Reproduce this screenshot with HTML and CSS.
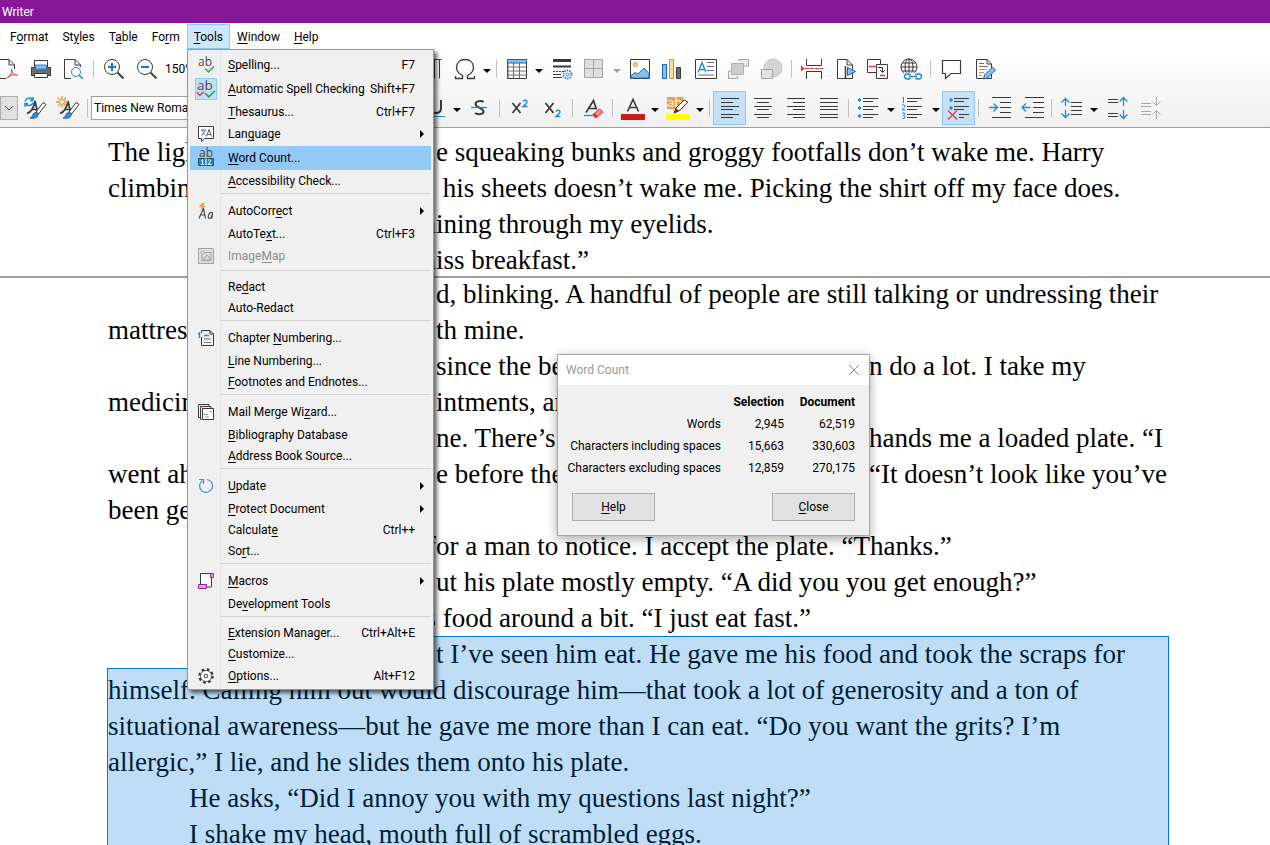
FILE: index.html
```html
<!DOCTYPE html>
<html lang="en">
<head>
<meta charset="utf-8">
<title>Writer</title>
<link rel="stylesheet" href="styles.css">
</head>
<body>
<header class="titlebar">Writer</header>

<nav class="menubar">
  <button>F<u>o</u>rmat</button>
  <button>St<u>y</u>les</button>
  <button>T<u>a</u>ble</button>
  <button>Fo<u>r</u>m</button>
  <button class="open"><u>T</u>ools</button>
  <button><u>W</u>indow</button>
  <button><u>H</u>elp</button>
</nav>

<section class="toolbars">
  <div class="toolbar">
    <div class="left standard">
      <button class="tool cut" aria-label="Export as PDF"><svg viewBox="0 0 24 24"><path class="k" d="M2 2.500H14L19.500 8V12M14 2.500V8H19.500M2 21.500H11"/><path class="r" d="M12 21c4-2 5-6 4.500-9 1 5 3 6 6 6-3-1-7 0-10.500 3"/></svg></button>
      <button class="tool" aria-label="Print"><svg viewBox="0 0 24 24"><path d="M2 10h20v9H2z" fill="#6d6d6d"/><path class="k" d="M2.500 10.500h19v8h-19z"/><path d="M5.500 3.500h13v7h-13z" fill="#fff" stroke="#3a3a38"/><path d="M6.500 8h11v4h-11z" fill="#83beec" stroke="#1e8bcd"/><path d="M5.500 16.500h13v4h-13z" fill="#fff" stroke="#3a3a38"/></svg></button>
      <button class="tool" aria-label="Print Preview"><svg viewBox="0 0 24 24"><path class="k" d="M9 21.500H2.500V2.500H13L18.500 8V10M13 2.500V8H18.500"/><circle cx="14" cy="15" r="4.500" fill="#fff" stroke="#1e8bcd"/><path d="M17 18l4 4" stroke="#1e8bcd" stroke-width="1.500"/></svg></button>
      <span class="sep"></span>
      <button class="tool" aria-label="Zoom In"><svg viewBox="0 0 24 24"><circle cx="10" cy="10" r="7.500" fill="#fff" stroke="#3a3a38"/><path d="M15.500 15.500l6 6" stroke="#3a3a38" stroke-width="1.800"/><path d="M6 10h8M10 6v8" stroke="#0f79c4" stroke-width="2"/></svg></button>
      <button class="tool" aria-label="Zoom Out"><svg viewBox="0 0 24 24"><circle cx="10" cy="10" r="7.500" fill="#fff" stroke="#3a3a38"/><path d="M15.500 15.500l6 6" stroke="#3a3a38" stroke-width="1.800"/><path d="M6 10h8" stroke="#0f79c4" stroke-width="2"/></svg></button>
      <span class="zoom">150%</span>
    </div>
    <button class="tool" aria-label="Formatting Marks"><svg viewBox="0 0 24 24"><path class="k" d="M21.500 2.500H11a4.500 4.500 0 0 0 0 9h3M14.500 2.500v19M19.500 2.500v19"/></svg></button>
    <button class="tool" aria-label="Special Character"><svg viewBox="0 0 24 24"><path d="M2.500 19v2.500h7v-3C5.500 16.500 3.500 14 3.500 10.500 3.500 5.500 7 2.500 12 2.500s8.500 3 8.500 8c0 3.500-2 6-6 8v3h7V19" fill="none" stroke="#3a3a38" stroke-width="1.300"/></svg></button>
    <span class="caret"></span>
    <span class="sep"></span>
    <button class="tool" aria-label="Insert Table"><svg viewBox="0 0 24 24"><path d="M2.500 2.500h19v19h-19z" fill="#fff" stroke="#3a3a38"/><path d="M3 6.500V21.500M8.500 6v15M14.500 6v15M3 10h18M3 14h18M3 18h18" stroke="#6d6d6d"/><path d="M2.500 2.500h19v3.500h-19z" fill="#83beec" stroke="#1565b4"/></svg></button>
    <span class="caret"></span>
    <button class="tool" aria-label="Line Style"><svg viewBox="0 0 24 24"><path d="M3 3.500h18" stroke="#3a3a38" stroke-width="3"/><path d="M3 9.500h18" stroke="#3a3a38" stroke-width="2"/><path d="M3 14.500h11" stroke="#3a3a38" stroke-dasharray="2 1"/><path d="M3 20.500h9M3 17.500h8" stroke="#3a3a38"/><circle cx="17.500" cy="17.500" r="4" fill="#fff" stroke="#1e8bcd" stroke-width="2" stroke-dasharray="1.500 1"/><circle cx="17.500" cy="17.500" r="1.500" fill="none" stroke="#1e8bcd"/></svg></button>
    <button class="tool" aria-label="Borders"><svg viewBox="0 0 24 24"><path d="M1.500 2.500h18v18h-18zM10.500 2.500v18M1.500 11.500h18" fill="#dedede" stroke="#a3a3a3"/></svg></button>
    <span class="caret dim"></span>
    <button class="tool" aria-label="Insert Image"><svg viewBox="0 0 24 24"><path d="M2.500 2.500h19v19h-19z" fill="#fff" stroke="#3a3a38"/><circle cx="7.500" cy="7.500" r="2" fill="#fbd6a1" stroke="#ed8733"/><path d="M3 18.500l4-3 3 1.500 6-6 5 5.500v4.500H3z" fill="#83beec" stroke="#1e6fc0"/></svg></button>
    <button class="tool" aria-label="Insert Chart"><svg viewBox="0 0 24 24"><path d="M1.500 7.500h4v14h-4z" fill="#83beec" stroke="#1565b4"/><path d="M8.500 2.500h4v19h-4z" fill="#fbdc9c" stroke="#e8872f"/><path d="M15.500 10.500h4v11h-4z" fill="#6d6d6d" stroke="#3a3a38"/></svg></button>
    <button class="tool" aria-label="Text Box"><svg viewBox="0 0 24 24"><path d="M1.500 2.500h21v19h-21z" fill="#fff" stroke="#3a3a38"/><path d="M4 15.500L8 5.500l4 10M5.500 12.500h5" fill="none" stroke="#1e8bcd" stroke-width="1.300"/><path d="M13 5.500h7M13 9.500h7M13 13.500h7M4 18h16" stroke="#6d6d6d"/></svg></button>
    <button class="tool" aria-label="Bring to Front"><svg viewBox="0 0 24 24"><path d="M12 4.500V2.500h9.500V9H17M4.500 14H1.500v7.500h9V19" fill="#eee" stroke="#a3a3a3"/><path d="M4.500 6.500h12v11h-12z" fill="#cdcdcd" stroke="#b0b0b0"/></svg></button>
    <button class="tool" aria-label="Insert Shape"><svg viewBox="0 0 24 24"><circle cx="13" cy="11" r="9" fill="#d4d4d4" stroke="#c4c4c4"/><path d="M1.500 12.500h11v9h-11z" fill="#e2e2e2" stroke="#a3a3a3"/></svg></button>
    <span class="sep"></span>
    <button class="tool" aria-label="Page Break"><svg viewBox="0 0 24 24"><path class="k" d="M6.500 2v6.500h15V2M6.500 22v-7.500h15V22"/><path d="M1 8.500l4 3-4 3z" fill="#e03e3e"/><path d="M5 11.500h18" stroke="#e03e3e" stroke-dasharray="4 1"/></svg></button>
    <button class="tool" aria-label="Insert Field"><svg viewBox="0 0 24 24"><path d="M4.500 21.500V2.500H14L19.500 8v13.500z" fill="#fff" stroke="#3a3a38"/><path d="M14 2.500V8h5.500" fill="none" stroke="#3a3a38"/><path d="M12.500 9v13" stroke="#3a3a38" stroke-width="1.500"/><path d="M14.500 10.500l8 4-8 4z" fill="#83beec" stroke="#1565b4"/></svg></button>
    <button class="tool" aria-label="Insert Cross-reference"><svg viewBox="0 0 24 24"><path class="k" d="M14.500 7V2.500h-13v13H10M15.500 7.500h6v14h-11v-14z"/><path d="M3 9.500h8M14 18.500h5" stroke="#e03e3e" stroke-width="1.500"/><path d="M12 10.500h4.500V15M14 13l2.500 2.500L19 13" fill="none" stroke="#3a3a38"/></svg></button>
    <button class="tool" aria-label="Insert Hyperlink"><svg viewBox="0 0 24 24"><circle cx="10" cy="10" r="8" fill="#fff" stroke="#3a3a38"/><ellipse cx="10" cy="10" rx="4" ry="8" fill="none" stroke="#3a3a38"/><path d="M10 2v14M2 10h16M3.500 6h13M3.500 14h13" stroke="#3a3a38"/><path d="M5 16h18v7H5z" fill="#f9f9f9"/><path d="M11.500 21c-1 1.500-6 1.500-6-1.500s5-3 6-1.500M16.500 18c1-1.500 6-1.500 6 1.500s-5 3-6 1.500M10 19.500h8" fill="none" stroke="#1e8bcd" stroke-width="1.400"/></svg></button>
    <span class="sep"></span>
    <button class="tool" aria-label="Insert Comment"><svg viewBox="0 0 24 24"><path d="M3.500 3.500h18v13H12l-5.500 5v-5h-3z" fill="#fff" stroke="#3a3a38" stroke-width="1.200"/></svg></button>
    <button class="tool" aria-label="Track Changes"><svg viewBox="0 0 24 24"><path d="M4.500 21.500V2.500H15L19.500 7v14.500z" fill="#fff" stroke="#3a3a38"/><path d="M15 2.500V7h4.500" fill="none" stroke="#3a3a38"/><path d="M7 6.500h5M7 9.500h9" stroke="#6d6d6d"/><path d="M7 12.500h8M7 15.500h5M7 18.500h3" stroke="#ed8733"/><path d="M11.500 22l1-4 8-8 3 3-8 8z" fill="#83beec" stroke="#1565b4"/></svg></button>
  </div>

  <div class="toolbar second">
    <div class="left formatting">
      <button class="style-drop" aria-label="Paragraph Style"><svg viewBox="0 0 10 10"><path d="M1 3l4 4 4-4" fill="none" stroke="#444"/></svg></button>
      <button class="tool" aria-label="Update Style"><svg viewBox="0 0 24 24"><path d="M4 17.500C8 16 11 11 12 5l3 13M8 13.500h6" fill="none" stroke="#3a3a38" stroke-width="1.700"/><path d="M2 5.500C3 1.500 8 1 10 4M10 1v3.500H7M10 6.500c-1 3.500-6 4-8 1M2 11V7.500h3" fill="none" stroke="#1e8bcd" stroke-width="1.400"/><path d="M13 16L20 6.500l3 2L15.500 18z" fill="#fff" stroke="#3a3a38"/><path d="M7 22c3 0 2-5 5.500-5.500 3 0 3.500 2.500 1.500 4.500-2 1.500-5 1.500-7 1z" fill="#3b87d3" stroke="#1565b4"/></svg></button>
      <button class="tool" aria-label="New Style"><svg viewBox="0 0 24 24"><path d="M4 17.500C8 16 11 11 12 5l3 13M8 13.500h6" fill="none" stroke="#3a3a38" stroke-width="1.700"/><path d="M6 0v12M0 6h12M2 2l8 8M10 2l-8 8" stroke="#f39a2e" stroke-width="1.300"/><circle cx="6" cy="6" r="2.300" fill="#fff" stroke="#f39a2e"/><path d="M13 16L20 6.500l3 2L15.500 18z" fill="#fff" stroke="#3a3a38"/><path d="M7 22c3 0 2-5 5.500-5.500 3 0 3.500 2.500 1.500 4.500-2 1.500-5 1.500-7 1z" fill="#3b87d3" stroke="#1565b4"/></svg></button>
      <span class="sep"></span>
      <input class="font-name" aria-label="Font Name" value="Times New Roman">
    </div>
    <button class="tool" aria-label="Underline"><svg viewBox="0 0 24 24"><path d="M8 4v8c0 3 2 5 5 5s5-2 5-5V4" fill="none" stroke="#3a3a38" stroke-width="2"/><path d="M4 20.500h18" stroke="#1e8bcd"/></svg></button>
    <span class="caret"></span>
    <button class="tool" aria-label="Strikethrough"><svg viewBox="0 0 24 24"><path d="M15.500 6C14 4.500 7.500 4.500 7.500 8c0 4 8 3.500 8 7.500 0 3.500-6.500 3-8.500 1.500" fill="none" stroke="#3a3a38" stroke-width="2"/><path d="M3 11.500h16" stroke="#1e8bcd" stroke-width="1.300"/></svg></button>
    <span class="sep"></span>
    <button class="tool" aria-label="Superscript"><svg viewBox="0 0 24 24"><path d="M4.500 7l8 10M12.500 7l-8 10" stroke="#3a3a38" stroke-width="1.800"/><path d="M15 5.500c1-2 4-1.500 4 .5 0 1.500-2 2.500-4 4.500h4.500" fill="none" stroke="#1e8bcd" stroke-width="1.400"/></svg></button>
    <button class="tool" aria-label="Subscript"><svg viewBox="0 0 24 24"><path d="M4.500 7l8 10M12.500 7l-8 10" stroke="#3a3a38" stroke-width="1.800"/><path d="M15 15.500c1-2 4-1.500 4 .5 0 1.500-2 2.500-4 4.500h4.500" fill="none" stroke="#1e8bcd" stroke-width="1.400"/></svg></button>
    <span class="sep"></span>
    <button class="tool" aria-label="Clear Formatting"><svg viewBox="0 0 24 24"><path d="M5 16.500L12.500 4.500l3 9M8 12.500h7" fill="none" stroke="#3a3a38" stroke-width="1.700"/><path d="M3 19.500h8" stroke="#1e8bcd" stroke-width="1.300"/><path d="M11.500 19l7-6 3.500 3-7 6z" fill="#f58a90" stroke="#d8303a"/><path d="M11.500 19l2-2 3.500 3.500-2 1.500z" fill="#d8303a"/></svg></button>
    <span class="sep"></span>
    <button class="tool" aria-label="Font Color"><svg viewBox="0 0 24 24"><path d="M6.500 15.500L12 3.500l5.500 12M8.500 11.500h7" fill="none" stroke="#3a3a38" stroke-width="1.600"/><path d="M0 18h24v6H0z" fill="#cb1c1c"/></svg></button>
    <span class="caret"></span>
    <button class="tool" aria-label="Highlighting Color"><svg viewBox="0 0 24 24"><path d="M1 1h16v12H1z" fill="#f89b3c"/><text x="1" y="11" class="glyph" fill="#fff">ab</text><path d="M8 17l2-5 8-8 4 2-9 9z" fill="#fff" stroke="#3a3a38"/><path d="M8 17l2-5 3 3z" fill="#3a3a38"/><path d="M0 18h24v6H0z" fill="#ff0"/></svg></button>
    <span class="caret"></span>
    <span class="sep"></span>
    <button class="tool on" aria-label="Align Left"><svg viewBox="0 0 24 24"><path class="k" d="M3 2.500h18M3 6.500h12M3 10.500h18M3 13.500h12M3 18.500h18M3 21.500h12"/></svg></button>
    <button class="tool" aria-label="Center"><svg viewBox="0 0 24 24"><path class="k" d="M3 2.500h18M6 6.500h12M3 10.500h18M6 13.500h12M3 18.500h18M6 21.500h12"/></svg></button>
    <button class="tool" aria-label="Align Right"><svg viewBox="0 0 24 24"><path class="k" d="M3 2.500h18M9 6.500h12M3 10.500h18M9 13.500h12M3 18.500h18M9 21.500h12"/></svg></button>
    <button class="tool" aria-label="Justified"><svg viewBox="0 0 24 24"><path class="k" d="M3 2.500h18M3 6.500h18M3 10.500h18M3 13.500h18M3 18.500h18M3 21.500h18"/></svg></button>
    <span class="sep"></span>
    <button class="tool" aria-label="Bullets"><svg viewBox="0 0 24 24"><path class="k" d="M6 2.500h15M6 5.500h10M6 10.500h15M6 13.500h10M6 18.500h15M6 21.500h10"/><g fill="#1e8bcd"><circle cx="2.500" cy="4" r="1.700"/><circle cx="2.500" cy="12" r="1.700"/><circle cx="2.500" cy="20" r="1.700"/></g></svg></button>
    <span class="caret"></span>
    <button class="tool" aria-label="Numbering"><svg viewBox="0 0 24 24"><path class="k" d="M5 2.500h15M5 5.500h10M5 10.500h15M5 13.500h10M5 18.500h15M5 21.500h10"/><path d="M0 2.500L1.500 1v6M0 9.500c1-1.500 3-1 3 .5 0 1-2 2.500-3 4h3.500M0 17.500c1-1 3-1 3 .5s-2 1.500-2 1.500 2 0 2 1.500-2 2-3 1" fill="none" stroke="#1e8bcd"/></svg></button>
    <span class="caret"></span>
    <button class="tool on" aria-label="No List"><svg viewBox="0 0 24 24"><path class="k" d="M7 2.500h15M7 5.500h10M7 10.500h15M7 13.500h10M12 18.500h10M12 21.500h5"/><g fill="#1e8bcd"><circle cx="4" cy="4" r="1.700"/><circle cx="4" cy="12" r="1.700"/></g><path d="M1 14.500l9 9M10 14.500l-9 9" stroke="#e03e3e" stroke-width="1.300"/></svg></button>
    <span class="sep"></span>
    <button class="tool" aria-label="Increase Indent"><svg viewBox="0 0 24 24"><path class="k" d="M5 1.500h19M13 6.500h11M13 11.500h11M13 16.500h11M5 21.500h19"/><path class="b" d="M2 11.500h8.500M6.500 7.500l4 4-4 4"/></svg></button>
    <button class="tool" aria-label="Decrease Indent"><svg viewBox="0 0 24 24"><path class="k" d="M5 1.500h19M13 6.500h11M13 11.500h11M13 16.500h11M5 21.500h19"/><path class="b" d="M10.500 11.500H2M6 7.500l-4 4 4 4"/></svg></button>
    <span class="sep"></span>
    <button class="tool" aria-label="Line Spacing"><svg viewBox="0 0 24 24"><path class="k" d="M11 6.500h11M11 10.500h11M11 14.500h11M11 18.500h11"/><path class="b" d="M5.500 10V2.500M1.500 6.500l4-4 4 4M5.500 14v7.500M1.500 17.500l4 4 4-4"/></svg></button>
    <span class="caret"></span>
    <button class="tool" aria-label="Increase Paragraph Spacing"><svg viewBox="0 0 24 24"><path class="k" d="M3 3.500h10M3 6.500h10M3 17.500h10M3 20.500h10"/><path class="b" d="M18.500 10V1.500M14.500 5.500l4-4 4 4M18.500 14v8.500M14.500 18.500l4 4 4-4"/></svg></button>
    <button class="tool" aria-label="Decrease Paragraph Spacing"><svg viewBox="0 0 24 24"><path d="M3 7.500h10M3 10.500h10M3 15.500h10M3 18.500h10M18.500 1v8.500M14.500 5.500l4 4 4-4M18.500 23v-8.500M14.500 18.500l4-4 4 4" fill="none" stroke="#a9a9a9"/></svg></button>
  </div>
</section>

<main class="workspace">
  <article class="page first">
    <p class="line"><span class="start">The ligh</span><span>e squeaking bunks and groggy footfalls don’t wake me. Harry</span></p>
    <p class="line"><span class="start">climbing</span><span> his sheets doesn’t wake me. Picking the shirt off my face does.</span></p>
    <p class="line"><span class="end">h</span><span>ining through my eyelids.</span></p>
    <p class="line"><span class="end">m</span><span>iss breakfast.”</span></p>
  </article>
  <article class="page">
    <p class="line"><span></span><span>d, blinking. A handful of people are still talking or undressing their</span></p>
    <p class="line"><span class="start">mattress</span><span>th mine.</span></p>
    <p class="line split"><span></span><span>since the best</span><span>n do a lot. I take my</span></p>
    <p class="line split"><span class="start">medicine</span><span>intments, and</span></p>
    <p class="line split"><span></span><span>ne. There’s</span><span>hands me a loaded plate. “I</span></p>
    <p class="line split"><span class="start">went ahead</span><span>e before the</span><span>“It doesn’t look like you’ve</span></p>
    <p class="line"><span class="start">been getting</span></p>
    <p class="line"><span class="end">f</span><span>or a man to notice. I accept the plate. “Thanks.”</span></p>
    <p class="line"><span></span><span>ut his plate mostly empty. “A did you you get enough?”</span></p>
    <p class="line"><span class="end">s</span><span> food around a bit. “I just eat fast.”</span></p>
    <div class="selected">
      <p class="line"><span></span><span>t I’ve seen him eat. He gave me his food and took the scraps for</span></p>
      <p>himself. Calling him out would discourage him—that took a lot of generosity and a ton of</p>
      <p>situational awareness—but he gave me more than I can eat. “Do you want the grits? I’m</p>
      <p>allergic,” I lie, and he slides them onto his plate.</p>
      <p class="indent">He asks, “Did I annoy you with my questions last night?”</p>
      <p class="indent">I shake my head, mouth full of scrambled eggs.</p>
    </div>
  </article>
</main>

<div class="menu" role="menu">
  <button class="icon-row"><svg viewBox="0 0 16 16"><text x="0" y="9" class="glyph small">ab</text><path d="M7 11.500l3.500 3.500L16 9.500" fill="none" stroke="#18ab50" stroke-width="1.300"/></svg><span><u>S</u>pelling...</span><kbd>F7</kbd></button>
  <button class="icon-row checked"><svg viewBox="0 0 16 16"><text x="0" y="9" class="glyph small">ab</text><path d="M0 11l2.500 2.500L6 10.500" fill="none" stroke="#e03e3e" stroke-width="1.300"/><path d="M7 11.500l3.500 3.500L16 9.500" fill="none" stroke="#18ab50" stroke-width="1.300"/></svg><span><u>A</u>utomatic Spell Checking</span><kbd>Shift+F7</kbd></button>
  <button><i></i><span><u>T</u>hesaurus...</span><kbd>Ctrl+F7</kbd></button>
  <button class="icon-row"><svg viewBox="0 0 16 16"><path d="M.5.500h15v12h-9l-3 3v-3h-3z" fill="#fff" stroke="#3a3a38"/><path d="M3 4h5M5.500 3v1M3.500 10l4-6M7.500 9.500l-4-5.500" fill="none" stroke="#3b87d3"/><path d="M8.500 10.500l2.500-7 2.500 7M9.500 8.500h3" fill="none" stroke="#555"/></svg><span>Lan<u>g</u>uage</span><kbd></kbd><b></b></button>
  <button class="icon-row current"><svg viewBox="0 0 16 16"><text x="1" y="7" class="glyph small">ab</text><path d="M.5 8.500h15v7H.5z" fill="#1e8bcd" stroke="#2f4a60"/><path d="M3.500 10.500l1-1v5M3 14.500h3M10 10.500c1-1.500 3-.5 2.500 1l-2.500 3h3.500M8 8.500v7" fill="none" stroke="#fff"/></svg><span><u>W</u>ord Count...</span></button>
  <button><i></i><span><u>A</u>ccessibility Check...</span></button>
  <hr>
  <button class="icon-row"><svg viewBox="0 0 16 16"><path d="M1 15.500L5.500 5.500l2 10M3 12h4.500M14.500 9.500c-4-1-5.500 6-3 6 2 0 3-4 3-6l-.5 6" fill="none" stroke="#4a4a4a" stroke-width="1.200"/><path d="M4 0L1 4h3L2 7.500 8 3H5l2-3z" fill="#f39a2e"/></svg><span>AutoCorr<u>e</u>ct</span><kbd></kbd><b></b></button>
  <button><i></i><span>AutoTe<u>x</u>t...</span><kbd>Ctrl+F3</kbd></button>
  <button class="icon-row disabled" disabled><svg viewBox="0 0 16 16"><path d="M.5.500h15v15H.5z" fill="#dcdcdc" stroke="#a3a3a3"/><circle cx="4.500" cy="4.500" r="1.500" fill="#eee" stroke="#a3a3a3"/><path d="M6 4.500h7v8H4V6M5 12l4-5 4 5z" fill="none" stroke="#a3a3a3"/></svg><span>Image<u>M</u>ap</span></button>
  <hr>
  <button><i></i><span>Re<u>d</u>act</span></button>
  <button><i></i><span>Auto-Redact</span></button>
  <hr>
  <button class="icon-row"><svg viewBox="0 0 16 16"><path d="M3.500 7V15.500h12V4L12 .5H3.500V3M12 .5V4h3.500" fill="none" stroke="#3a3a38"/><path d="M0 4l1.500-1v5M6 5.500h5" fill="none" stroke="#1e8bcd" stroke-width="1.400"/><path d="M6 9h7M6 12.500h7" stroke="#777"/></svg><span>Chapter <u>N</u>umbering...</span></button>
  <button><i></i><span><u>L</u>ine Numbering...</span></button>
  <button><i></i><span><u>F</u>ootnotes and Endnotes...</span></button>
  <hr>
  <button class="icon-row"><svg viewBox="0 0 16 16"><path d="M2 13.500H.5V.5H11V2M3.500 15.500h-1v-13H13V4" fill="none" stroke="#3a3a38"/><path d="M4.500 4.500h11v11h-11z" fill="#fff" stroke="#3a3a38"/><path d="M6 10.500h4M7 13h4M12 7.500h2" stroke="#4b9fe0"/></svg><span>Mail Merge Wi<u>z</u>ard...</span></button>
  <button><i></i><span><u>B</u>ibliography Database</span></button>
  <button><i></i><span><u>A</u>ddress Book Source...</span></button>
  <hr>
  <button class="icon-row"><svg viewBox="0 0 16 16"><path d="M9 1.500A6.500 6.500 0 1 1 4.500 2.500M1 1.500h4.500V6" fill="none" stroke="#3c96d8" stroke-width="1.200"/></svg><span><u>U</u>pdate</span><kbd></kbd><b></b></button>
  <button><i></i><span><u>P</u>rotect Document</span><kbd></kbd><b></b></button>
  <button><i></i><span>Calculat<u>e</u></span><kbd>Ctrl++</kbd></button>
  <button><i></i><span>So<u>r</u>t...</span></button>
  <hr>
  <button class="icon-row"><svg viewBox="0 0 16 16"><path d="M2.500 12V.5h11v13.500h-5" fill="#fff" stroke="#3a3a38"/><path d="M.5 11.500h8v4h-8zM12.500.500h3v4h-3z" fill="#d9a3dd" stroke="#92278f"/></svg><span><u>M</u>acros</span><kbd></kbd><b></b></button>
  <button><i></i><span>De<u>v</u>elopment Tools</span></button>
  <hr>
  <button><i></i><span><u>E</u>xtension Manager...</span><kbd>Ctrl+Alt+E</kbd></button>
  <button><i></i><span><u>C</u>ustomize...</span></button>
  <button class="icon-row"><svg viewBox="0 0 16 16"><circle cx="8" cy="8" r="6.500" fill="none" stroke="#3a3a38" stroke-width="2.500" stroke-dasharray="2.600 2.500"/><circle cx="8" cy="8" r="5.500" fill="#fff" stroke="#3a3a38" stroke-width=".8"/><circle cx="8" cy="8" r="1.800" fill="none" stroke="#3a3a38"/></svg><span><u>O</u>ptions...</span><kbd>Alt+F12</kbd></button>
</div>

<section class="dialog" role="dialog" aria-labelledby="wc-title">
  <header><h2 id="wc-title">Word Count</h2><button class="close" aria-label="Close window"><svg viewBox="0 0 12 12"><path d="M1 1l10 10M11 1L1 11" stroke="#8a8a8a"/></svg></button></header>
  <table>
    <thead><tr><td></td><th scope="col">Selection</th><th scope="col">Document</th></tr></thead>
    <tbody>
      <tr><th scope="row">Words</th><td>2,945</td><td>62,519</td></tr>
      <tr><th scope="row">Characters including spaces</th><td>15,663</td><td>330,603</td></tr>
      <tr><th scope="row">Characters excluding spaces</th><td>12,859</td><td>270,175</td></tr>
    </tbody>
  </table>
  <footer><button><u>H</u>elp</button><button><u>C</u>lose</button></footer>
</section>
</body>
</html>
```
FILE: styles.css
```css
*,
*::before,
*::after {
  box-sizing: border-box;
}

body {
  margin: 0;
  height: 100vh;
  overflow: hidden;
  display: flex;
  flex-direction: column;
  background: #fff;
  color: #000;
  font: 12px/16px Roboto, "Open Sans", sans-serif;
}

button {
  margin: 0;
  padding: 0;
  border: 0;
  background: none;
  color: inherit;
  font: inherit;
}

u {
  text-underline-offset: 2px;
}

svg {
  display: block;
}

.titlebar {
  flex: none;
  height: 23px;
  padding: 4px 2px;
  background: #881798;
  color: #fff;
}

.menubar {
  flex: none;
  display: flex;
  height: 27px;
  padding: 1px 3px;
}

.menubar button {
  padding: 0 7px;
  border: 1px solid transparent;
  border-width: 1px 0;
}

.menubar .open {
  padding: 0 6px;
  border: 1px solid #90c8f6;
  background: #cce8ff;
}

/* Toolbars */

.toolbars {
  flex: none;
  background: linear-gradient(#fff, #f0f0f0);
  border-bottom: 1px solid #a0a0a0;
}

.toolbar {
  display: flex;
  align-items: center;
  height: 38px;
}

.toolbar.second {
  height: 39px;
}

.toolbar .left {
  flex: none;
  display: flex;
  align-items: center;
  overflow: hidden;
}

.standard {
  width: 415px;
}

.formatting {
  width: 418px;
}

.tool {
  flex: none;
  display: flex;
  align-items: center;
  justify-content: center;
  width: 33px;
  height: 34px;
}

.tool svg {
  flex: none;
  width: 24px;
  height: 24px;
}

.tool.cut {
  width: 24px;
  justify-content: flex-end;
  padding-right: 5px;
}

.tool.on {
  background: #c3e0f7;
  border: 1px solid #90c8f6;
}

.k {
  fill: none;
  stroke: #3a3a38;
}

.b {
  fill: none;
  stroke: #1e8bcd;
  stroke-width: 1.3;
}

.r {
  fill: none;
  stroke: #e03e3e;
}

.glyph {
  font: 13px "Open Sans", sans-serif;
}

.glyph.small {
  font-size: 12px;
  fill: #4a4a4a;
}

.sep {
  flex: none;
  width: 7px;
  height: 18px;
  background: linear-gradient(#c0c0c0, #c0c0c0) center / 1px 100% no-repeat;
}

.caret {
  flex: none;
  width: 12px;
  display: flex;
  justify-content: center;
}

.caret::before {
  content: "";
  margin-top: 4px;
  border: 4px solid transparent;
  border-top-color: #000;
  border-bottom: 0;
}

.caret.dim::before {
  border-top-color: #a0a0a0;
}

.zoom {
  padding-left: 2px;
}

.style-drop {
  flex: none;
  display: flex;
  align-items: center;
  justify-content: center;
  width: 18px;
  height: 24px;
  border: 1px solid #adadad;
  background: #e1e1e1;
}

.style-drop svg {
  width: 10px;
  height: 10px;
}

.font-name {
  width: 200px;
  height: 24px;
  padding: 0 2px;
  border: 1px solid #a0a0a0;
  background: #fff;
  font: inherit;
}

/* Document */

.workspace {
  flex: 1;
  min-height: 0;
  overflow: hidden;
  font: 27px/36px "Liberation Serif", "Times New Roman", serif;
}

.page {
  padding: 0 101px 0 108px;
  box-shadow: inset 0 2px #a0a0a0;
}

.page.first {
  padding-top: 6px;
  margin-bottom: -2px;
  box-shadow: none;
}

.page p {
  margin: 0;
  height: 36px;
  white-space: pre;
}

.page .line {
  display: grid;
  grid-template-columns: 328px 1fr;
}

.page .split {
  grid-template-columns: 328px 433px 1fr;
}

.end {
  text-align: right;
}

.page .indent {
  padding-left: 81px;
}

.selected {
  position: relative;
}

.selected::before,
.selected::after {
  content: "";
  position: absolute;
  left: -1px;
  right: 0;
  background: rgba(0, 120, 215, 0.25);
  border: solid #0078d7;
}

.selected::before {
  top: 0;
  left: 200px;
  height: 32px;
  border-width: 1px 1px 0 0;
}

.selected::after {
  top: 32px;
  bottom: 0;
  border-width: 0 1px;
  background: linear-gradient(#0078d7, #0078d7) 0 0 / 201px 1px no-repeat, rgba(0, 120, 215, 0.25);
}

/* Tools menu */

.menu {
  position: absolute;
  left: 187px;
  top: 49px;
  width: 247px;
  display: flex;
  flex-direction: column;
  padding: 3px 2px 1px;
  border: 1px solid #979797;
  background: linear-gradient(#e4e4e4, #e4e4e4) 32px 0 / 1px 100% no-repeat, #f0f0f0;
  box-shadow: 3px 3px 4px rgba(0, 0, 0, 0.6);
}

.menu button {
  display: grid;
  grid-template-columns: 38px 1fr auto 16px;
  align-items: center;
  height: 21px;
  text-align: left;
  white-space: nowrap;
}

.menu .icon-row {
  height: 24px;
}

.menu svg {
  width: 16px;
  height: 16px;
  margin-left: 8px;
  overflow: visible;
}

.menu kbd {
  font: inherit;
}

.menu b {
  margin-left: 5px;
  width: 0;
  border: 4px solid transparent;
  border-left-color: #000;
  border-right: 0;
}

.menu .checked svg {
  width: 22px;
  height: 22px;
  padding: 2px;
  margin-left: 5px;
  background: #c3e0f7;
  outline: 1px solid #90c8f6;
  outline-offset: -1px;
}

.menu .current {
  background: #91c9f7;
}

.menu .disabled {
  color: #8d8d8d;
}

.menu hr {
  width: calc(100% - 31px);
  margin: 2px 0 5px 31px;
  border: 0;
  border-top: 1px solid #d2d2d2;
}

/* Word count window */

.dialog {
  position: absolute;
  left: 557px;
  top: 354px;
  width: 313px;
  border: 1px solid #a5a5a5;
  background: #f0f0f0;
  box-shadow: 0 3px 10px rgba(0, 0, 0, 0.35);
}

.dialog header {
  display: flex;
  align-items: center;
  justify-content: space-between;
  height: 30px;
  padding: 0 9px 0 8px;
  background: #fff;
}

.dialog h2 {
  margin: 0;
  color: #999;
  font: inherit;
}

.close svg {
  width: 12px;
  height: 12px;
}

.dialog table {
  width: 100%;
  margin-top: 6px;
  padding-right: 14px;
  border-spacing: 0;
  text-align: right;
  table-layout: fixed;
}

.dialog th,
.dialog td {
  height: 22px;
  padding: 0;
  white-space: nowrap;
}

.dialog thead td {
  width: 163px;
}

.dialog thead th:last-child {
  width: 71px;
}

.dialog tbody th {
  font-weight: 400;
}

.dialog footer {
  display: flex;
  justify-content: space-between;
  padding: 14px;
}

.dialog footer button {
  width: 83px;
  height: 28px;
  border: 1px solid #adadad;
  background: #e1e1e1;
}
```
